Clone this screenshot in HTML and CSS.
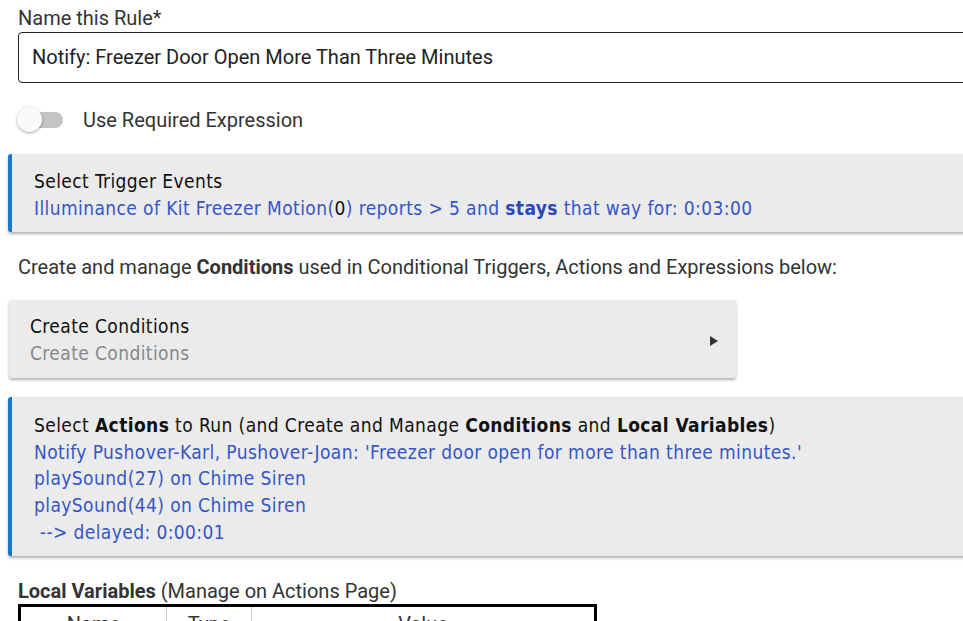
FILE: index.html
```html
<!DOCTYPE html>
<html lang="en">

<head>
    <meta charset="UTF-8">
    <meta name="viewport" content="width=device-width, initial-scale=1.0">
    <title>Rule Machine</title>
    <link rel="stylesheet" href="styles.css">
</head>

<body>
    <main>
        <div class="field">
            <label class="label">Name this Rule*</label>
            <div class="input">Notify: Freezer Door Open More Than Three Minutes</div>
        </div>

        <div class="switch-row">
            <span class="switch"><span class="knob"></span></span>
            <span class="switch-label">Use Required Expression</span>
        </div>

        <div class="card accent trigger">
            <div class="card-title">Select Trigger Events</div>
            <div class="card-text">Illuminance of Kit Freezer Motion(<span class="dark">0</span>) reports &gt; 5 and <b>stays</b> that way for: 0:03:00</div>
        </div>

        <p class="note">Create and manage <b>Conditions</b> used in Conditional Triggers, Actions and Expressions below:</p>

        <div class="card conditions">
            <div class="card-body">
                <div class="card-title">Create Conditions</div>
                <div class="card-sub">Create Conditions</div>
            </div>
            <span class="arrow"></span>
        </div>

        <div class="card accent actions">
            <div class="card-title">Select <b>Actions</b> to Run (and Create and Manage <b>Conditions</b> and <b>Local Variables</b>)</div>
            <div class="card-text">Notify Pushover-Karl, Pushover-Joan: 'Freezer door open for more than three minutes.'</div>
            <div class="card-text">playSound(27) on Chime Siren</div>
            <div class="card-text">playSound(44) on Chime Siren</div>
            <div class="card-text">&nbsp;--&gt; delayed: 0:00:01</div>
        </div>

        <div class="vars">
            <div class="vars-title"><b>Local Variables</b> (Manage on Actions Page)</div>
            <table class="vars-table">
                <tr>
                    <th class="col-name">Name</th>
                    <th class="col-type">Type</th>
                    <th>Value</th>
                </tr>
            </table>
        </div>
    </main>
</body>

</html>
```

FILE: styles.css
```css
* {
    padding: 0;
    margin: 0;
    box-sizing: border-box;
}

body {
    font-family: Roboto, "Liberation Sans", sans-serif;
    font-size: 20px;
    color: #333;
    background: #fff;
    overflow: hidden;
}

main {
    padding: 6px 0 0 8px;
    width: 1000px;
}

.field {
    padding-left: 10px;
}

.label {
    display: block;
    line-height: 24px;
    color: #333;
}

.input {
    margin-top: 2px;
    height: 51px;
    border: 1px solid #222;
    border-radius: 4px;
    padding: 0 13px;
    line-height: 49px;
    color: #222;
}

.switch-row {
    display: flex;
    align-items: center;
    margin-top: 25px;
    padding-left: 10px;
    height: 24px;
}

.switch {
    position: relative;
    width: 45px;
    height: 16px;
    border-radius: 8px;
    background: #c4c4c4;
}

.knob {
    position: absolute;
    left: -1px;
    top: -5px;
    width: 25px;
    height: 25px;
    border-radius: 50%;
    background: #fafafa;
    box-shadow: 0 1px 3px rgba(0, 0, 0, 0.35);
}

.switch-label {
    margin-left: 20px;
}

.card {
    background: #ebebeb;
    font-family: "DejaVu Sans Condensed", "DejaVu Sans", sans-serif;
    font-size: 19px;
    letter-spacing: 0.4px;
    line-height: 26.7px;
    color: #111;
    box-shadow: 0 2px 3px rgba(0, 0, 0, 0.3);
    border-radius: 3px;
}

.accent {
    border-left: 4px solid #1a77c9;
    padding: 14px 12px 12px 22px;
}

.trigger {
    margin-top: 22px;
    height: 78px;
}

.card-text {
    color: #3556c7;
}

.card-text b {
    color: #2a48b8;
}

.dark {
    color: #111;
}

.note {
    margin-top: 23px;
    padding-left: 10px;
    line-height: 24px;
}

.conditions {
    display: flex;
    align-items: center;
    justify-content: space-between;
    width: 727px;
    height: 78px;
    margin: 21px 0 0 1px;
    padding: 2px 18px 0 21px;
}

.card-sub {
    color: #888;
}

.arrow {
    width: 0;
    height: 0;
    border-top: 5px solid transparent;
    border-bottom: 5px solid transparent;
    border-left: 8px solid #333;
    margin-top: 2px;
}

.actions {
    margin-top: 19px;
    height: 159px;
    padding-top: 15px;
}

.vars {
    padding-left: 10px;
    margin-top: 23px;
}

.vars-title {
    line-height: 24px;
}

.vars-table {
    border-collapse: collapse;
    border: 3px solid #000;
    width: 579px;
    margin-top: 1px;
}

.vars-table th {
    font-weight: normal;
    text-align: center;
    border-left: 1px solid #ccc;
    height: 40px;
    padding-top: 5px;
    vertical-align: top;
}

.col-name {
    width: 147px;
}

.col-type {
    width: 85px;
}
```
